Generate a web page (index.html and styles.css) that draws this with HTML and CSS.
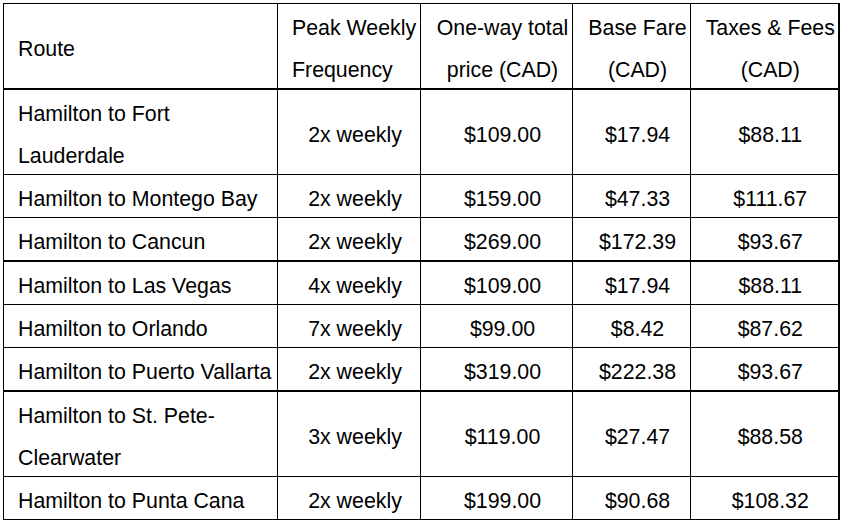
FILE: index.html
```html
<!DOCTYPE html>
<html>
<head>
<meta charset="utf-8">
<link rel="stylesheet" href="styles.css">
</head>
<body>
<table class="fares">
  <colgroup>
    <col class="c-route">
    <col class="c-freq">
    <col class="c-total">
    <col class="c-base">
    <col class="c-tax">
  </colgroup>
  <thead>
    <tr class="head">
      <th class="left"><div class="txt">Route</div></th>
      <th class="left"><div class="txt">Peak Weekly Frequency</div></th>
      <th><div class="txt">One-way total price (CAD)</div></th>
      <th><div class="txt">Base Fare (CAD)</div></th>
      <th><div class="txt">Taxes &amp; Fees (CAD)</div></th>
    </tr>
  </thead>
  <tbody>
    <tr>
      <td class="left"><div class="txt">Hamilton to Fort Lauderdale</div></td>
      <td><div class="txt">2x weekly</div></td><td><div class="txt">$109.00</div></td><td><div class="txt">$17.94</div></td><td><div class="txt">$88.11</div></td>
    </tr>
    <tr>
      <td class="left"><div class="txt">Hamilton to Montego Bay</div></td>
      <td><div class="txt">2x weekly</div></td><td><div class="txt">$159.00</div></td><td><div class="txt">$47.33</div></td><td><div class="txt">$111.67</div></td>
    </tr>
    <tr class="thick">
      <td class="left"><div class="txt">Hamilton to Cancun</div></td>
      <td><div class="txt">2x weekly</div></td><td><div class="txt">$269.00</div></td><td><div class="txt">$172.39</div></td><td><div class="txt">$93.67</div></td>
    </tr>
    <tr>
      <td class="left"><div class="txt">Hamilton to Las Vegas</div></td>
      <td><div class="txt">4x weekly</div></td><td><div class="txt">$109.00</div></td><td><div class="txt">$17.94</div></td><td><div class="txt">$88.11</div></td>
    </tr>
    <tr>
      <td class="left"><div class="txt">Hamilton to Orlando</div></td>
      <td><div class="txt">7x weekly</div></td><td><div class="txt">$99.00</div></td><td><div class="txt">$8.42</div></td><td><div class="txt">$87.62</div></td>
    </tr>
    <tr class="thick">
      <td class="left"><div class="txt">Hamilton to Puerto Vallarta</div></td>
      <td><div class="txt">2x weekly</div></td><td><div class="txt">$319.00</div></td><td><div class="txt">$222.38</div></td><td><div class="txt">$93.67</div></td>
    </tr>
    <tr>
      <td class="left"><div class="txt">Hamilton to St. Pete-Clearwater</div></td>
      <td><div class="txt">3x weekly</div></td><td><div class="txt">$119.00</div></td><td><div class="txt">$27.47</div></td><td><div class="txt">$88.58</div></td>
    </tr>
    <tr>
      <td class="left"><div class="txt">Hamilton to Punta Cana</div></td>
      <td><div class="txt">2x weekly</div></td><td><div class="txt">$199.00</div></td><td><div class="txt">$90.68</div></td><td><div class="txt">$108.32</div></td>
    </tr>
  </tbody>
</table>
</body>
</html>
```
FILE: styles.css
```css
html, body {
  margin: 0;
  padding: 0;
  background: #fff;
}
body {
  padding: 3px 0 0 3px;
  font-family: "Liberation Sans", Arial, sans-serif;
  color: #000;
}
.fares {
  border-collapse: collapse;
  table-layout: fixed;
  width: 835px;
  border-right: 2px solid #000;
}
.c-route { width: 274px; }
.c-freq { width: 143px; }
.c-total { width: 152px; }
.c-base { width: 118px; }
.c-tax { width: 148px; }
.fares th,
.fares td {
  border: 1px solid #000;
  padding: 0 2px 0 14px;
  font-size: 21.33px;
  line-height: 42px;
  font-weight: normal;
  text-align: center;
  vertical-align: middle;
}
.fares .txt {
  margin-top: 3px;
  margin-bottom: -3px;
}
.fares th:last-child,
.fares td:last-child {
  border-right: 2px solid #000;
}
.fares .left {
  text-align: left;
}
.head th {
  border-bottom: 2px solid #000;
}
.thick td {
  border-bottom: 2px solid #000;
}
```
